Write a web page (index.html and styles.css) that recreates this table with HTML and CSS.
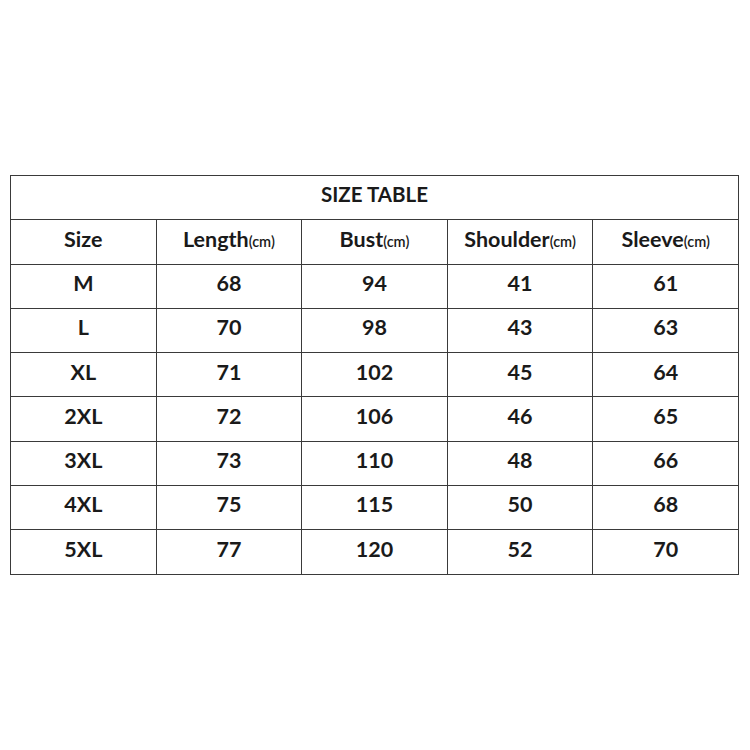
FILE: index.html
```
<!DOCTYPE html>
<html>
<head>
<meta charset="utf-8">
<link rel="stylesheet" href="styles.css">
</head>
<body>
<div class="page">
  <table class="size-table">
    <tr class="title-row"><th class="title" colspan="5">SIZE TABLE</th></tr>
    <tr class="head">
      <td>Size</td>
      <td>Length<span class="unit">(cm)</span></td>
      <td>Bust<span class="unit">(cm)</span></td>
      <td>Shoulder<span class="unit">(cm)</span></td>
      <td>Sleeve<span class="unit">(cm)</span></td>
    </tr>
    <tr><td>M</td><td>68</td><td>94</td><td>41</td><td>61</td></tr>
    <tr><td>L</td><td>70</td><td>98</td><td>43</td><td>63</td></tr>
    <tr><td>XL</td><td>71</td><td>102</td><td>45</td><td>64</td></tr>
    <tr><td>2XL</td><td>72</td><td>106</td><td>46</td><td>65</td></tr>
    <tr><td>3XL</td><td>73</td><td>110</td><td>48</td><td>66</td></tr>
    <tr><td>4XL</td><td>75</td><td>115</td><td>50</td><td>68</td></tr>
    <tr><td>5XL</td><td>77</td><td>120</td><td>52</td><td>70</td></tr>
  </table>
</div>
</body>
</html>
```
FILE: styles.css
```
html, body {
  margin: 0;
  padding: 0;
  background: #ffffff;
}
.page {
  width: 750px;
  height: 750px;
  padding-top: 175px;
  padding-left: 10px;
  box-sizing: border-box;
}
.size-table {
  border-collapse: collapse;
  width: 729px;
  table-layout: fixed;
  font-family: Lato, "Open Sans", sans-serif;
  font-weight: 700;
  color: #1a1a1a;
}
.size-table tr {
  height: 44.3px;
}
.size-table th,
.size-table td {
  border: 1px solid #3a3a3a;
  padding: 0 0 5px 0;
  text-align: center;
  vertical-align: middle;
  font-size: 21.5px;
  line-height: 1;
}
.size-table .title {
  font-size: 20.5px;
  font-weight: 700;
  padding-bottom: 6px;
}
.unit {
  font-size: 14.5px;
  font-weight: 600;
}
```
